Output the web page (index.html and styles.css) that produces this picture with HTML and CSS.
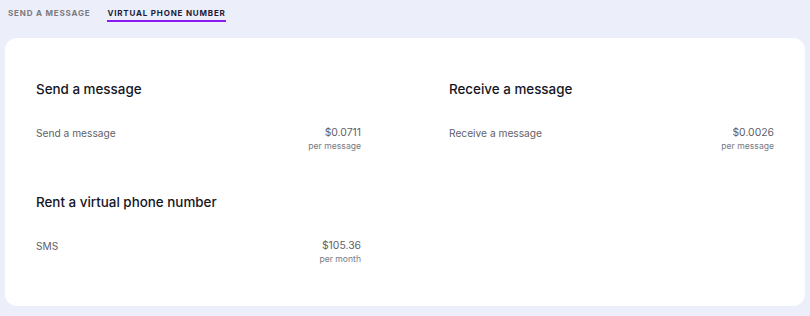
FILE: index.html
```html
<!DOCTYPE html>
<html lang="en">
<head>
<meta charset="utf-8">
<link rel="stylesheet" href="styles.css">
</head>
<body>
  <nav class="tabs">
    <span class="tab">SEND A MESSAGE</span>
    <span class="tab tab-active">VIRTUAL PHONE NUMBER</span>
  </nav>
  <main class="card">
    <section class="section">
      <h2 class="section-title">Send a message</h2>
      <div class="row">
        <span class="row-label">Send a message</span>
        <div class="price">
          <div class="price-value">$0.0711</div>
          <div class="price-unit">per message</div>
        </div>
      </div>
    </section>
    <section class="section">
      <h2 class="section-title">Receive a message</h2>
      <div class="row">
        <span class="row-label">Receive a message</span>
        <div class="price">
          <div class="price-value">$0.0026</div>
          <div class="price-unit">per message</div>
        </div>
      </div>
    </section>
    <section class="section">
      <h2 class="section-title">Rent a virtual phone number</h2>
      <div class="row">
        <span class="row-label">SMS</span>
        <div class="price">
          <div class="price-value">$105.36</div>
          <div class="price-unit">per month</div>
        </div>
      </div>
    </section>
  </main>
</body>
</html>
```

FILE: styles.css
```css
* { box-sizing: border-box; }
html, body {
  margin: 0;
  padding: 0;
  background: #eceef9;
  font-family: Inter, "Noto Sans", sans-serif;
}
body {
  padding: 0 5px;
  width: 810px;
  height: 316px;
  overflow: hidden;
}
.tabs {
  display: flex;
  gap: 17px;
  padding: 7px 0 0 3px;
  height: 38px;
}
.tab {
  font-size: 8px;
  line-height: 12px;
  font-weight: 700;
  letter-spacing: 0.82px;
  color: #7a7a80;
  padding-bottom: 1px;
  height: 15px;
}
.tab-active {
  color: #1b1b3a;
  border-bottom: 2px solid #8a1cf2;
}
.card {
  background: #fff;
  border-radius: 12px;
  padding: 41px 31px;
  display: grid;
  grid-template-columns: 325px 325px;
  column-gap: 88px;
  row-gap: 40px;
  height: 268px;
}
.section-title {
  margin: 0 0 25px;
  font-size: 13.4px;
  line-height: 20px;
  font-weight: 500;
  color: #15151f;
}
.row {
  display: flex;
  justify-content: space-between;
  align-items: flex-start;
  padding-top: 1px;
}
.row-label {
  font-size: 10.2px;
  line-height: 16px;
  color: #5e616a;
}
.price { text-align: right; }
.price-value {
  font-size: 10.4px;
  line-height: 15px;
  color: #5e616a;
}
.price-unit {
  font-size: 8.6px;
  line-height: 12px;
  color: #777a82;
}
```
